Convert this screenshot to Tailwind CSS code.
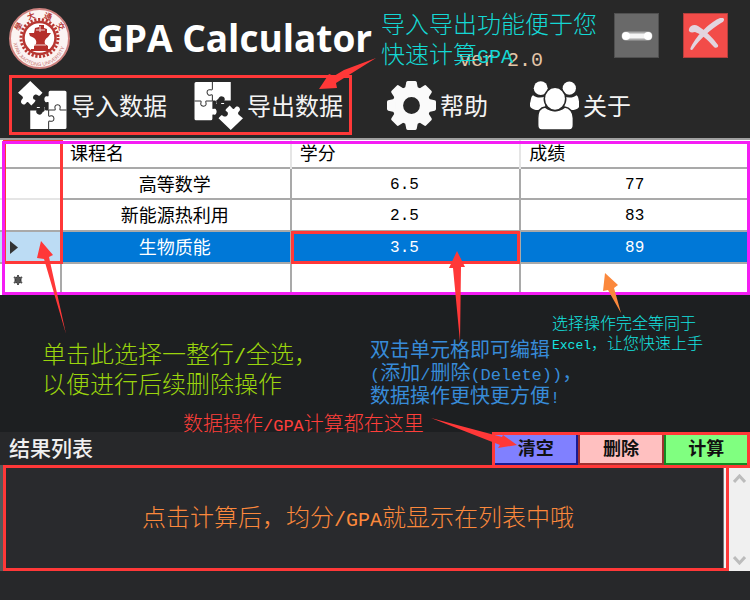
<!DOCTYPE html>
<html lang="zh-CN">
<head>
<meta charset="utf-8">
<meta name="viewport" content="width=device-width, initial-scale=1">
<title>GPA Calculator</title>
<script src="https://cdn.jsdelivr.net/npm/@tailwindcss/browser@4"></script>
</head>
<body class="relative flex min-h-screen flex-col overflow-x-hidden bg-[#1d1f21] font-['Liberation_Sans','Noto_Sans_CJK_SC',sans-serif]">

<header class="bg-[#282828] pb-[3px]">
  <div class="flex h-[75px] items-start pl-[9px] pr-[22px]">
    <svg class="mt-2 size-[61px] shrink-0" viewBox="0 0 61 61" role="img" aria-label="校徽">
      <circle cx="30.500" cy="30.500" r="29.500" fill="#fbf3f2" stroke="#cf8380" stroke-width="2"/>
      <circle cx="30.500" cy="30" r="18.500" fill="none" stroke="#b83732" stroke-width="3" stroke-dasharray="2.200 1.670"/>
      <circle cx="30.500" cy="30" r="16" fill="#fff" stroke="#b83732" stroke-width="2.500"/>
      <path fill="#b52f2b" d="M20 25h5l1-5 4-1v-2h5v3l3 1v4h4l-3 4c-3 2-4 4-3 7l3 2v3h3v2H22v-2h3v-3l2-2c1-4-1-6-6-8z"/>
      <path stroke="#f2d9d7" fill="none" d="M27 22h9M25 37h12M31 18v6"/>
      <g fill="#b83732" font-size="8" font-weight="700" text-anchor="middle" font-family="'Noto Sans CJK SC',sans-serif">
        <text transform="translate(12 20) rotate(-58)">學</text>
        <text transform="translate(23 11) rotate(-20)">大</text>
        <text transform="translate(38 11) rotate(20)">通</text>
        <text transform="translate(49 20) rotate(58)">交</text>
      </g>
      <path id="ring" fill="none" d="M4.500 32a26 26 0 0 0 52 0"/>
      <text fill="#c9706c" font-size="5" font-family="'Liberation Sans',sans-serif"><textPath href="#ring" startOffset="3">XI'AN JIAOTONG UNIVERSITY</textPath></text>
    </svg>
    <h1 class="ml-[27px] mt-[14px] whitespace-nowrap font-['Open_Sans',sans-serif] text-[37px] font-bold leading-[48px] text-white">GPA Calculator</h1>
    <div class="ml-auto flex gap-6 pt-[13px]">
      <button type="button" aria-label="最小化" class="size-[45px] border border-[#505050] bg-[#696969]">
        <svg class="size-full" viewBox="0 0 43 43" aria-hidden="true"><path d="M11 22H33" stroke="#a8a8a8" stroke-width="9" stroke-linecap="round"/><path d="M11 22H33" stroke="#f4f4f4" stroke-width="5" stroke-linecap="round"/><circle cx="11" cy="22" r="4" fill="#fff"/><circle cx="33" cy="22" r="4" fill="#fff"/></svg>
      </button>
      <button type="button" aria-label="关闭" class="size-[45px] border border-[#b43e3c] bg-[#f24c49]">
        <svg class="size-full" viewBox="0 0 43 43" aria-hidden="true" fill="#e2d5df"><path d="M39 4c2 1 1 4-2 5C27 15 16 25 9 35c-1 2-4 1-2-2C13 20 28 7 36 4z"/><path d="M5 15c1-4 6-5 9-3 8 5 15 12 20 19 1 2-2 4-4 2-7-8-13-13-19-15-4 1-7 0-6-3z"/></svg>
      </button>
    </div>
  </div>

  <nav aria-label="工具栏" class="flex items-center pl-[9px] text-2xl leading-8 text-[#f4f4f4]">
    <div class="flex h-[60px] items-center gap-[27px] border-[3px] border-[#ff3838] px-[6px]">
      <button type="button" class="flex items-center gap-1 whitespace-nowrap">
        <svg class="size-[49px]" viewBox="0 0 48 48" aria-hidden="true">
          <g id="pieces">
            <path fill="#fff" d="M12 0 24 11.500l-2.500 2.700c-1.500 1.300-2-1.500-4.500-1-2.500.8-3 4-1 5 1.800.5 1.200 1.800-.5 3.300l-2.500 2.500-3-3.200c-1.500-1.200-1.800 1.200-3.500 2.200-2.500.2-4.200-2-3.300-4 1-1.700 2.500-2 1-4L0 11.500z"/>
            <path fill="#fff" d="M31.500 9.500H46q1.500 0 1.500 1.500v34.500q0 1.500-1.500 1.500H12V29h6c2-.3 0-1.800.5-3.500h3c-1 2 .5 5.500 3.500 4.500 2-1 1-2.500.5-4.500 1.500 0 0 3 2 3.500H30V21.500c0-2-1.800 0-3.200-1-1.500-1.700-1.300-4.500.5-5.500 1.500-.5 2.700 1 2.700-1V11q0-1.500 1.500-1.500z"/>
            <path fill="#282828" d="M16 26.500h10c-2 2-1 5.500-4.500 6.500-3.500 0-4.500-3-3-5z"/>
            <path fill="none" stroke="#333" stroke-width="1" d="M30 28.500h6c1.500-.5-.5-2 .3-3.800 1-1.900 4-1.900 4.900 0 .8 1.800-1.200 3.300.3 3.800H47.500M30 28.500V34c.5 1.500 2-.5 3.800.3 1.900 1 1.900 4.200 0 5-1.800.8-3.300-1-3.800.7v7"/>
          </g>
        </svg><span class="pt-1">导入数据</span>
      </button>
      <button type="button" class="flex items-center gap-1 whitespace-nowrap">
        <svg class="size-[49px]" viewBox="0 0 48 48" aria-hidden="true"><use href="#pieces" transform="rotate(180 24 24)"/></svg><span class="pt-1">导出数据</span>
      </button>
    </div>
    <div class="ml-[35px] flex items-center gap-[42px]">
      <button type="button" class="flex items-center gap-1 whitespace-nowrap">
        <svg class="size-[49px]" viewBox="0 0 48 48" aria-hidden="true" fill="#fafafa">
          <circle cx="24" cy="24" r="13.500" fill="none" stroke="#fafafa" stroke-width="10.500"/>
          <g id="teeth"><path id="tooth" d="M20.500 0h7q1.300 0 1.600 1.300L30.500 8h-13l1.400-6.700Q19.200 0 20.500 0z"/><use href="#tooth" transform="rotate(90 24 24)"/><use href="#tooth" transform="rotate(180 24 24)"/><use href="#tooth" transform="rotate(270 24 24)"/></g>
          <use href="#teeth" transform="rotate(45 24 24)"/>
        </svg><span class="pt-1">帮助</span>
      </button>
      <button type="button" class="flex items-center gap-1 whitespace-nowrap">
        <svg class="size-[49px]" viewBox="0 0 48 48" aria-hidden="true" fill="#fff">
          <circle cx="10.500" cy="7" r="6.800"/><circle cx="38.500" cy="7" r="6.500"/>
          <path d="M3 14c3 2.500 8 3 12 1v10c-2 3-7 4-11 2.800C0 27-1 24 .5 20 1 17 1.500 14.500 3 14zM45.500 14c-3 2.500-8 3-12 1v10c2 3 7 4 11 2.800 4-.8 4.500-3.800 3.500-7.800-.5-3-1-5.500-2.500-6z"/>
          <path stroke="#282828" stroke-width="1.500" d="M15 25.500c6 4.500 13 4.500 19 0 5 .5 8.500 5 8.500 11V43c0 3-1 5-4 5h-27c-3 0-4-2-4-5v-6.500c0-6 2.500-10.500 7.500-11z"/>
          <ellipse cx="24.500" cy="17.500" rx="10.500" ry="11.300" stroke="#282828" stroke-width="1.500"/>
        </svg><span class="pt-1">关于</span>
      </button>
    </div>
  </nav>
</header>

<main class="flex flex-1 flex-col">
  <section aria-label="课程成绩" class="relative border-t-2 border-[#a0a0a0] bg-white pb-[2px]">
    <table class="w-full table-fixed border-collapse text-center text-lg leading-6 text-black">
      <colgroup><col class="w-[61px]"><col><col><col></colgroup>
      <thead>
        <tr class="h-[28px] border-b-2 border-[#a9a9a9] text-left">
          <th scope="col" aria-label="选择" class="border-r-2 border-[#a9a9a9]"></th>
          <th scope="col" class="border-r-2 border-[#e5e5e5] pl-2 font-normal">课程名</th>
          <th scope="col" class="border-r-2 border-[#e5e5e5] pl-2 font-normal">学分</th>
          <th scope="col" class="pl-2 font-normal">成绩</th>
        </tr>
      </thead>
      <tbody>
        <tr class="h-[31px] border-b-2 border-[#a9a9a9]">
          <th scope="row" aria-label="第 1 行" class="border-b-2 border-r-2 border-b-[#e5e5e5] border-r-[#a9a9a9]"></th>
          <td class="border-r-2 border-[#a9a9a9] pr-[2px] pt-[2px]">高等数学</td>
          <td class="border-r-2 border-[#a9a9a9] pr-[2px] pt-[2px] font-['Liberation_Mono',monospace] text-[16px]">6.5</td>
          <td class="pr-[2px] pt-[2px] font-['Liberation_Mono',monospace] text-[16px]">77</td>
        </tr>
        <tr class="h-[32px] border-b-2 border-[#a9a9a9]">
          <th scope="row" aria-label="第 2 行" class="border-r-2 border-[#a9a9a9]"></th>
          <td class="border-r-2 border-[#a9a9a9] pr-[2px] pt-[2px]">新能源热利用</td>
          <td class="border-r-2 border-[#a9a9a9] pr-[2px] pt-[2px] font-['Liberation_Mono',monospace] text-[16px]">2.5</td>
          <td class="pr-[2px] pt-[2px] font-['Liberation_Mono',monospace] text-[16px]">83</td>
        </tr>
        <tr aria-selected="true" class="h-[32px] border-b-2 border-[#a9a9a9] bg-[#0078d7] text-white">
          <th scope="row" aria-label="当前行" class="border-r-2 border-[#a9a9a9] bg-[#bcdcf4]">
            <svg class="ml-[9px] h-[15px] w-[10px]" viewBox="0 0 10 15" aria-hidden="true"><path d="M1 1 9 7.500 1 14z" fill="#333"/></svg>
          </th>
          <td class="border-r-2 border-[#a9a9a9] pr-[2px] pt-[2px]">生物质能</td>
          <td class="relative border-r-2 border-[#a9a9a9] pr-[2px] pt-[2px] font-['Liberation_Mono',monospace] text-[16px]">3.5<span class="absolute -inset-x-px -bottom-[2px] -top-px border-[3px] border-[#ff3838]"></span></td>
          <td class="pr-[2px] pt-[2px] font-['Liberation_Mono',monospace] text-[16px]">89</td>
        </tr>
        <tr class="h-[30px]">
          <th scope="row" aria-label="新行" class="border-r-2 border-[#a9a9a9]">
            <svg class="ml-[13px] mt-[2px] size-[10px]" viewBox="0 0 10 10" aria-hidden="true"><circle cx="5" cy="5" r="3.500" fill="#333"/><path d="M5 0v10M1 2l8 6M9 2 1 8" stroke="#555" stroke-width="2"/></svg>
          </th>
          <td class="border-r-2 border-[#a9a9a9]"></td>
          <td class="border-r-2 border-[#a9a9a9]"></td>
          <td></td>
        </tr>
      </tbody>
    </table>
    <span class="absolute left-[3px] top-0 h-[124px] w-[60px] border-[3px] border-[#ff3838]"></span>
    <span class="absolute bottom-0 left-[2px] right-0 top-px border-[3px] border-[#f41df4]"></span>
  </section>

  <div class="flex-1"></div>

  <section aria-labelledby="results-title" class="bg-[#27282a] pb-[29px]">
    <div class="flex h-[36px] items-start justify-between">
      <h2 id="results-title" class="pl-[9px] text-[21px] font-medium leading-[34px] text-[#f0f0f0]">结果列表</h2>
      <div class="flex h-[36px] w-[258px] border-[3px] border-[#ff3838] text-lg font-bold leading-6 text-[#111]">
        <button type="button" class="flex-1 border-b-2 border-r-2 border-[#1a1a90] bg-[#8080ff]">清空</button>
        <button type="button" class="flex-1 border-x-2 border-b-2 border-[#a03030] bg-[#ffc0c0]">删除</button>
        <button type="button" class="flex-1 border-b-2 border-l-2 border-[#128a22] bg-[#80ff80]">计算</button>
      </div>
    </div>
    <div class="-mt-[3px] flex h-[106px] border-l-[3px] border-[#55585a]">
      <div role="listbox" aria-label="结果列表" tabindex="0" class="flex flex-1 items-center justify-center border-[3px] border-[#ff3838] bg-[#292a2d] shadow-[inset_-2px_0_0_#f4f4f4,inset_-3px_0_0_#777]">
        <p class="pr-4 text-2xl font-light leading-[30px] text-[#fb883c]">点击计算后，均分<span class="font-['Liberation_Mono',monospace] text-xl leading-none">/GPA</span>就显示在列表中哦</p>
      </div>
      <div class="mt-[3px] flex w-[21px] flex-col justify-between bg-[#f0f0f0]">
        <button type="button" aria-label="向上滚动" class="flex h-[22px] items-center justify-center"><svg class="h-[10px] w-[13px]" viewBox="0 0 13 10" aria-hidden="true"><path d="M1 8l5.500-6L12 8" fill="none" stroke="#bcbcbc" stroke-width="3"/></svg></button>
        <button type="button" aria-label="向下滚动" class="flex h-[22px] items-center justify-center"><svg class="h-[10px] w-[13px]" viewBox="0 0 13 10" aria-hidden="true"><path d="M1 2l5.500 6L12 2" fill="none" stroke="#bcbcbc" stroke-width="3"/></svg></button>
      </div>
    </div>
  </section>
</main>

<!-- Version label and guide notes floating over the window -->
<div class="pointer-events-none absolute inset-0 whitespace-nowrap font-light">
  <p class="absolute left-[459px] top-[46px] font-['Liberation_Mono',monospace] text-xl leading-[30px] text-[#e3c5a8]">ver 2.0</p>
  <p class="absolute left-[381px] top-[10px] text-2xl leading-[30px] text-[#14d8d4]">导入导出功能便于您<br>快速计算<span class="font-['Liberation_Mono',monospace] text-xl leading-none">GPA</span></p>
  <p class="absolute left-[42px] top-[340px] text-2xl leading-[30px] text-[#9ad40d]">单击此选择一整行<span class="font-['Liberation_Mono',monospace] text-xl leading-none">/</span>全选，<br>以便进行后续删除操作</p>
  <p class="absolute left-[370px] top-[339px] text-xl leading-[23px] font-normal text-[#378bd8]">双击单元格即可编辑<br><span class="font-['Liberation_Mono',monospace] text-[17px] leading-none">(</span>添加<span class="font-['Liberation_Mono',monospace] text-[17px] leading-none">/</span>删除<span class="font-['Liberation_Mono',monospace] text-[17px] leading-none">(Delete))</span>，<br>数据操作更快更方便<span class="font-['Liberation_Mono',monospace] text-[17px] leading-none">!</span></p>
  <p class="absolute left-[552px] top-[314px] text-base leading-[20px] text-[#14e4e0]">选择操作完全等同于<br><span class="font-['Liberation_Mono',monospace] text-[13px] leading-none">Excel</span>，让您快速上手</p>
  <p class="absolute left-[183px] top-[413px] text-xl leading-[23px] text-[#ff3f3b]">数据操作<span class="font-['Liberation_Mono',monospace] text-[17px] leading-none">/GPA</span>计算都在这里</p>
  <svg class="absolute left-0 top-0 h-[600px] w-[750px]" viewBox="0 0 750 600" fill="#ff3838" aria-hidden="true">
    <path d="M376 58 344 70 334 76 329 74 319 89 337 88 336 83z"/>
    <path d="M41 241 53 255 49 257 66 334 44 259 37 258z"/>
    <path d="M457 251 465 267 461 267 460 342 453 268 449 268z"/>
    <path d="M431 418 502 437 503 435 517 445 498 448 500 445z"/>
    <path fill="#fb883c" d="M605 273 618 285 614 288 621 313 608 290 603 291z"/>
  </svg>
</div>
</body>
</html>
